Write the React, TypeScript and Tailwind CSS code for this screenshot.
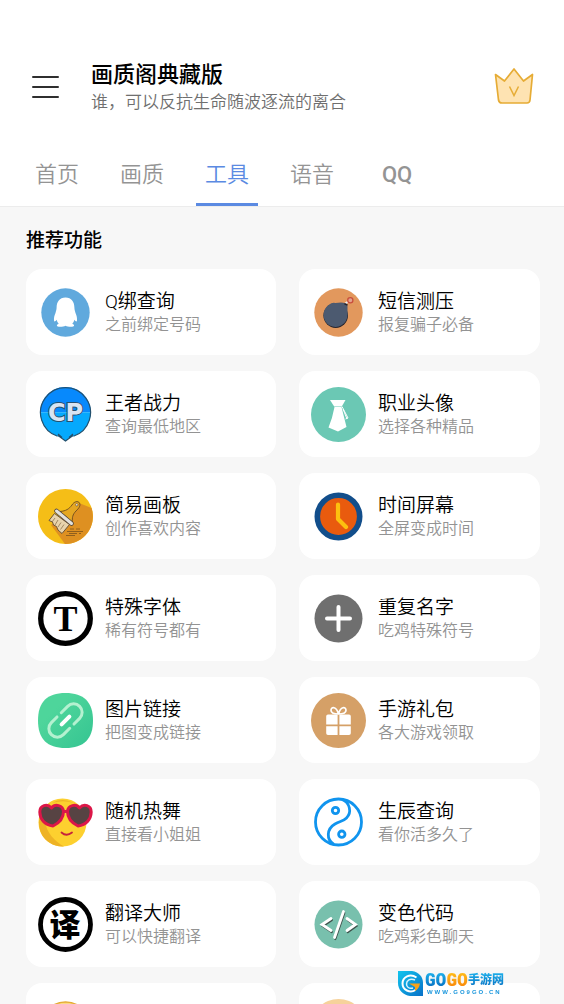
import React, { useState } from "react";

interface Tool {
  title: string;
  desc: string;
  icon: React.ReactNode;
}

interface IconProps {
  children: React.ReactNode;
}

const Icon: React.FC<IconProps> = ({ children }) => (
  <svg
    viewBox="0 0 55 55"
    className="size-[55px] shrink-0"
    fill="none"
    aria-hidden="true"
  >
    {children}
  </svg>
);

const PenguinIcon = () => (
  <Icon>
    <circle cx="27.5" cy="27.5" r="24.2" fill="#60a9dd" />
    <path
      d="M27.5 12.5C21.5 12.5 18.6 17 18.6 22.5C18.6 24.5 18 26 17.5 28C16.3 30.5 15.8 33 16 35.5C16.2 37.3 17.5 36.5 18.6 34.8C19 36.5 19.7 37.8 20.7 38.8C18.3 39.8 18.3 41.6 20.8 41.8C23.5 42 26 41.6 27.5 40.8C29 41.6 31.5 42 34.2 41.8C36.7 41.6 36.7 39.8 34.3 38.8C35.3 37.8 36 36.5 36.4 34.8C37.5 36.5 38.8 37.3 39 35.5C39.2 33 38.7 30.5 37.5 28C37 26 36.4 24.5 36.4 22.5C36.4 17 33.5 12.5 27.5 12.5Z"
      fill="#fff"
    />
  </Icon>
);

const BombIcon = () => (
  <Icon>
    <circle cx="27.5" cy="27.5" r="24.2" fill="#e2985d" />
    <circle cx="24.7" cy="30.6" r="12.3" fill="#27242c" />
    <path
      d="M24.5 18L30 17.5Q35 17.5 36.5 20.5L36.5 30A12 12 0 1 1 18 19.8Q21 17 24.5 18Z"
      fill="#4c5a70"
    />
    <path d="M34.5 18.5L38.5 15.5" stroke="#eee" strokeWidth="2" />
    <path d="M33.5 18.8L36.5 20" stroke="#27242c" strokeWidth="1.5" />
    <circle cx="39.3" cy="15.2" r="2.6" fill="#e3a28c" stroke="#c84d3c" strokeWidth="1.3" />
  </Icon>
);

const PowerIcon = () => (
  <Icon>
    <path d="M2.2 25.2A25.3 25.3 0 0 1 52.8 25.2Z" fill="#0789fc" />
    <path
      d="M2.2 25.2H52.8A25.3 25.3 0 0 1 36 49L32 50L27.5 54L23 50L19 49A25.3 25.3 0 0 1 2.2 25.2Z"
      fill="#05a9fd"
    />
    <path
      d="M20 48.5L27.5 54L35 48.5M20 47L24 50.5M35 47L31 50.5M19.5 49.3A25 25 0 1 1 35.5 49.3"
      stroke="#23506d"
      strokeWidth="1.2"
    />
    <text
      x="27.5"
      y="33.5"
      textAnchor="middle"
      fontSize="24"
      fill="#d9e4f2"
      stroke="#28506f"
      strokeWidth="2"
      paintOrder="stroke"
      className="font-['DejaVu_Sans',sans-serif] font-bold"
    >
      CP
    </text>
  </Icon>
);

const TieIcon = () => (
  <Icon>
    <circle cx="27.5" cy="27.5" r="27.5" fill="#6bc8b4" />
    <path d="M19 13H34.5L30.8 19.5H23.2Z" fill="#fff" />
    <path
      d="M23.5 20H30.5L35.5 40L27 44.5L17.5 40.5Q21.5 31 23.5 20Z"
      fill="#fff"
    />
    <path d="M31 19.5L37 31L34.5 32M32 22L36 32" stroke="#fff" strokeWidth="1" />
  </Icon>
);

const BrushIcon = () => (
  <Icon>
    <circle cx="27.5" cy="27.5" r="27.5" fill="#f5be17" />
    <path d="M41 14L53.5 19A27.5 27.5 0 0 1 27 55L13 36Z" fill="#de9021" />
    <path
      d="M22 22.5C28 22 31 20 34 16C36 12.5 40 11.5 41.5 14C43 17 40.5 19.5 38 22C34.5 25.5 34 29 34.5 33Z"
      fill="#e5a722"
      stroke="#6c4b20"
      strokeWidth="0.9"
    />
    <circle cx="38.8" cy="15.8" r="1.2" fill="#fff" stroke="#6c4b20" strokeWidth="0.7" />
    <path
      d="M16.5 24.5L11 31.5L14.5 33L15.5 36L18.5 37.5L20 41L24 44.5L31.5 35.5Z"
      fill="#e8d3ac"
      stroke="#5d4a34"
      strokeWidth="0.9"
    />
    <path
      d="M17 29L14 33M20 31L17 36M23 33.5L20 38M26 35.5L22.5 40.5"
      stroke="#8d7450"
      strokeWidth="0.8"
    />
    <path d="M18.5 22L33.5 34.5" stroke="#594b3d" strokeWidth="4.5" strokeLinecap="round" />
    <path d="M18.5 22L33.5 34.5" stroke="#e3e1dc" strokeWidth="3" strokeLinecap="round" />
    <path
      d="M32 40H36M38 40H42M29 42.5H45M31 44.5H39M41 44.5H43M28 46.5H37"
      stroke="#7d531c"
      strokeWidth="0.8"
    />
  </Icon>
);

const ClockIcon = () => (
  <Icon>
    <circle cx="27.5" cy="27.5" r="21.2" fill="#e95b0e" stroke="#124e8b" strokeWidth="5.6" />
    <path
      d="M27 15.5V30L35 38"
      stroke="#fdc00f"
      strokeWidth="4.2"
      strokeLinecap="round"
      strokeLinejoin="round"
    />
  </Icon>
);

const FontIcon = () => (
  <Icon>
    <circle cx="27.5" cy="27.5" r="24.8" fill="#fff" stroke="#000" strokeWidth="5.3" />
    <text
      x="27.5"
      y="39.5"
      textAnchor="middle"
      fontSize="36"
      fill="#000"
      className="font-['Liberation_Serif',serif] font-bold"
    >
      T
    </text>
  </Icon>
);

const PlusIcon = () => (
  <Icon>
    <circle cx="27.5" cy="27.5" r="24" fill="#6f6f6f" />
    <path d="M27.5 16V39M16 27.5H39" stroke="#fff" strokeWidth="4" strokeLinecap="round" />
  </Icon>
);

const LinkIcon = () => (
  <Icon>
    <defs>
      <linearGradient id="link-bg" x1="0" y1="0" x2="1" y2="1">
        <stop offset="0.3" stopColor="#4ed59b" />
        <stop offset="1" stopColor="#34c491" />
      </linearGradient>
    </defs>
    <path
      d="M27.5 0C46 0 55 9 55 27.5S46 55 27.5 55S0 46 0 27.5S9 0 27.5 0Z"
      fill="url(#link-bg)"
    />
    <g transform="translate(27.5 27.5) rotate(-45)" strokeLinecap="round">
      <path
        d="M2.5 -8.5H11.5A8.5 8.5 0 0 1 11.5 8.5H3.5M-3.5 -8.5H-11.5A8.5 8.5 0 0 0 -11.5 8.5H-2.5"
        stroke="#b4f1d0"
        strokeWidth="3"
      />
      <path d="M-5.5 0H5.5" stroke="#fff" strokeWidth="4" />
    </g>
  </Icon>
);

const GiftIcon = () => (
  <Icon>
    <circle cx="27.5" cy="27.5" r="27.5" fill="#d5a067" />
    <path
      d="M17 21.5H26.6V31.5H15.2V23.3Q15.2 21.5 17 21.5ZM28.4 21.5H38Q39.8 21.5 39.8 23.3V31.5H28.4ZM15.2 33.3H26.6V42H17Q15.2 42 15.2 40.2ZM28.4 33.3H39.8V40.2Q39.8 42 38 42H28.4Z"
      fill="#fff"
    />
    <path
      d="M27.5 21C23 21 20 19.5 20 17.2C20 13.5 25.5 13 27.5 21ZM27.5 21C32 21 35 19.5 35 17.2C35 13.5 29.5 13 27.5 21Z"
      stroke="#fff"
      strokeWidth="1.7"
    />
  </Icon>
);

const GlassesIcon = () => (
  <Icon>
    <circle cx="24.5" cy="27.5" r="24" fill="#fdd02f" />
    <path
      d="M9 9C-3 22 -1 40 12 48Q18 52 26 51.4C17 47 8 37 7 26Q6.5 17 9 9Z"
      fill="#eeb325"
    />
    <path d="M14 8Q24 2 36 8Q25 4.5 14 8Z" fill="#eeb325" />
    <g fill="#574343" stroke="#dc1648" strokeWidth="3" strokeLinejoin="round">
      <path d="M13.5 13C9 8 1.8 10.5 1.8 17C2 24 6.5 30 15 31C22 27.5 25.5 23 25.5 16.5C25 10 17 8.5 13.5 13Z" />
      <path d="M41.5 13C38 8.5 30 10 29.5 16.5C29.5 23 33 27.5 40 31C48.5 30 53 24 53.2 17C53.2 10.5 46 8 41.5 13Z" />
    </g>
    <path d="M24.5 16.5H30.5" stroke="#dc1648" strokeWidth="3" />
    <path
      d="M23.5 37.5Q28.5 42 34 37.5"
      stroke="#c6213c"
      strokeWidth="1.8"
      strokeLinecap="round"
    />
  </Icon>
);

const TaijiIcon = () => (
  <Icon>
    <g stroke="#1094ee" strokeWidth="2.8">
      <circle cx="27.5" cy="27" r="23" />
      <path d="M31 4.5C39 7.5 41 17.5 35.5 23C32 26.5 29 26 24 29C15.5 34 15 44.5 23 49.5" />
      <circle cx="24.5" cy="15.5" r="3.2" />
      <circle cx="30.8" cy="39.2" r="3.2" />
    </g>
  </Icon>
);

const TranslateIcon = () => (
  <Icon>
    <circle cx="27.5" cy="27.5" r="25" fill="#fff" stroke="#000" strokeWidth="4.8" />
    <text
      x="27"
      y="39"
      textAnchor="middle"
      fontSize="31"
      fill="#000"
      className="font-['Noto_Sans_CJK_SC',sans-serif] font-black"
    >
      译
    </text>
  </Icon>
);

const codePath =
  "M20 21.5L11 27.5L20 33.5M36 21.5L44.5 27.5L36 33.5M32.5 14.5L23.5 40.5";

const CodeIcon = () => (
  <Icon>
    <circle cx="27.5" cy="27.5" r="24" fill="#78c0ad" />
    <path
      d={codePath}
      transform="translate(0.8 1.5)"
      stroke="#40534d"
      strokeWidth="2.2"
      strokeLinecap="round"
    />
    <path d={codePath} stroke="#fff" strokeWidth="2.8" strokeLinecap="round" />
  </Icon>
);

const FaceIcon = () => (
  <Icon>
    <circle cx="27.5" cy="27.5" r="24.5" fill="#fbd982" stroke="#e5ab35" strokeWidth="1.5" />
  </Icon>
);

const PlainIcon = () => (
  <Icon>
    <circle cx="27.5" cy="27.5" r="27.5" fill="#f6d29b" />
  </Icon>
);

const tools: Tool[] = [
  { title: "Q绑查询", desc: "之前绑定号码", icon: <PenguinIcon /> },
  { title: "短信测压", desc: "报复骗子必备", icon: <BombIcon /> },
  { title: "王者战力", desc: "查询最低地区", icon: <PowerIcon /> },
  { title: "职业头像", desc: "选择各种精品", icon: <TieIcon /> },
  { title: "简易画板", desc: "创作喜欢内容", icon: <BrushIcon /> },
  { title: "时间屏幕", desc: "全屏变成时间", icon: <ClockIcon /> },
  { title: "特殊字体", desc: "稀有符号都有", icon: <FontIcon /> },
  { title: "重复名字", desc: "吃鸡特殊符号", icon: <PlusIcon /> },
  { title: "图片链接", desc: "把图变成链接", icon: <LinkIcon /> },
  { title: "手游礼包", desc: "各大游戏领取", icon: <GiftIcon /> },
  { title: "随机热舞", desc: "直接看小姐姐", icon: <GlassesIcon /> },
  { title: "生辰查询", desc: "看你活多久了", icon: <TaijiIcon /> },
  { title: "翻译大师", desc: "可以快捷翻译", icon: <TranslateIcon /> },
  { title: "变色代码", desc: "吃鸡彩色聊天", icon: <CodeIcon /> },
  { title: "", desc: "", icon: <FaceIcon /> },
  { title: "", desc: "", icon: <PlainIcon /> },
];

const tabs: string[] = ["首页", "画质", "工具", "语音", "QQ"];

const Header = () => {
  return (
    <div className="flex items-center pr-[30px] pl-8">
      <button aria-label="菜单" className="flex w-[27px] flex-col gap-2">
        <span className="h-0.5 w-full rounded-full bg-[#2f2f2f]" />
        <span className="h-0.5 w-full rounded-full bg-[#2f2f2f]" />
        <span className="h-0.5 w-full rounded-full bg-[#2f2f2f]" />
      </button>
      <div className="ml-8 flex-1">
        <h1 className="text-[22px] leading-[30px] font-medium text-black">
          画质阁典藏版
        </h1>
        <p className="text-[17px] leading-6 font-[350] text-[#6f6f6f]">
          谁，可以反抗生命随波逐流的离合
        </p>
      </div>
      <button aria-label="会员">
        <svg viewBox="0 0 40 38" className="h-[38px] w-10" fill="none">
          <path
            d="M1.5 6.5L10.5 13L20 1L29.5 13L38.5 6.5L36 32Q35.7 35 33 35H8Q5 35 4.5 32Z"
            fill="#fee3b2"
            stroke="#e6ac35"
            strokeWidth="1.7"
            strokeLinejoin="round"
          />
          <path d="M15.5 18.5L20 27.5L24.5 18.5" stroke="#e6ac35" strokeWidth="1.5" />
        </svg>
      </button>
    </div>
  );
};

const Tabs = () => {
  const [active, setActive] = useState("工具");
  return (
    <nav className="mt-[38px] flex gap-[23px] border-b border-[#ececec] pl-[26px]">
      {tabs.map((tab) => (
        <button
          key={tab}
          onClick={() => setActive(tab)}
          className={`min-w-[62px] border-b-3 px-[9px] pt-[9px] pb-[14px] text-[22px] leading-7 ${
            active === tab
              ? "border-[#5b8ae2] text-[#5b8ae2]"
              : "border-transparent text-[#949494]"
          } ${tab === "QQ" ? "font-medium" : "font-[350]"}`}
        >
          {tab}
        </button>
      ))}
    </nav>
  );
};

const ToolCard: React.FC<Tool> = ({ title, desc, icon }) => {
  return (
    <a
      href="#"
      className="flex h-[86px] items-center gap-3 rounded-2xl bg-white px-3"
    >
      {icon}
      <div className="pt-0.5 font-[350]">
        <h3 className="text-[19px] leading-6 text-black">{title}</h3>
        <p className="text-base leading-[22px] text-[#939393]">{desc}</p>
      </div>
    </a>
  );
};

const Watermark = () => {
  return (
    <div className="fixed right-[60px] bottom-2 flex items-center gap-0.5">
      <svg viewBox="0 0 25 25" className="size-[25px]" fill="none">
        <defs>
          <linearGradient id="mark" x1="0" y1="0" x2="1" y2="1">
            <stop offset="0" stopColor="#12c5ee" />
            <stop offset="1" stopColor="#0871c8" />
          </linearGradient>
        </defs>
        <path d="M0 0H14C21 1 25 6 25 12V25H12C5 24 0 19 0 12Z" fill="url(#mark)" />
        <path
          d="M18.5 6.5C12 2 4.5 6 4.5 12.5C4.5 19 12 22.5 17.5 19"
          stroke="#fff"
          strokeWidth="2"
        />
        <path d="M17 9C12 7 8.5 9.5 8.5 13C8.5 16 11 18 15 17" stroke="#d6f3ff" strokeWidth="1.5" />
        <path d="M11 12.5H22Q21 18 17 20L17 16Z" fill="#f7a21a" />
      </svg>
      <div className="flex flex-col">
        <div className="flex items-center text-lg leading-[18px] font-black">
          <span className="bg-linear-to-b from-[#22b8f0] to-[#0868bd] bg-clip-text font-['Liberation_Sans_Narrow','Roboto_Condensed',sans-serif] text-transparent">
            GO
          </span>
          <span className="bg-linear-to-b from-[#ffc21a] to-[#f77f08] bg-clip-text font-['Liberation_Sans_Narrow','Roboto_Condensed',sans-serif] text-transparent">
            GO
          </span>
          <span className="bg-linear-to-b from-[#22b8f0] to-[#0868bd] bg-clip-text text-xs leading-[18px] text-transparent">
            手游网
          </span>
        </div>
        <span className="pl-0.5 font-['Liberation_Sans',sans-serif] text-[6px] leading-[7px] font-bold tracking-[2px] text-[#1795dc]">
          WWW.GO9GO.CN
        </span>
      </div>
    </div>
  );
};

export default function App() {
  return (
    <div className="flex h-screen flex-col overflow-hidden bg-[#f7f7f7] font-[Roboto,'Noto_Sans_CJK_SC',sans-serif]">
      <header className="shrink-0 bg-white pt-[60px]">
        <Header />
        <Tabs />
      </header>
      <main className="min-h-0 flex-1 overflow-y-auto pt-5 pr-6 pl-[26px] [scrollbar-width:none]">
        <h2 className="text-[19px] leading-7 font-medium text-black">
          推荐功能
        </h2>
        <div className="mt-[14px] grid grid-cols-[250fr_241fr] gap-x-[23px] gap-y-4">
          {tools.map((tool, idx) => (
            <ToolCard key={idx} {...tool} />
          ))}
        </div>
      </main>
      <Watermark />
    </div>
  );
}
